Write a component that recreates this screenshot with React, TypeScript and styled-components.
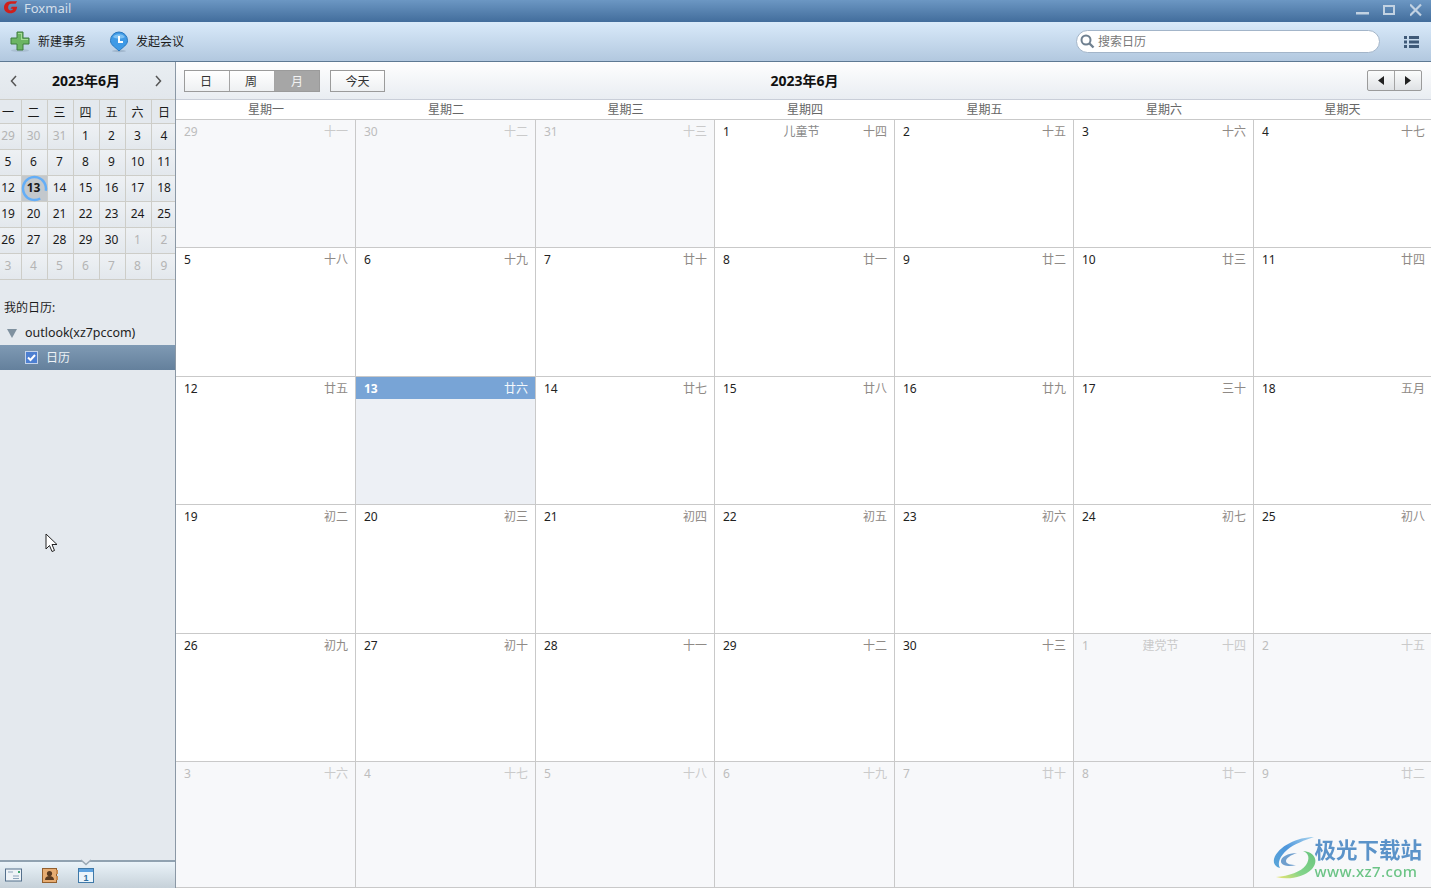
import React from "react";
import styled, { createGlobalStyle } from "styled-components";

const sansStack = `"Noto Sans", "Noto Sans CJK SC", sans-serif`;

const GlobalStyle = createGlobalStyle`
  html, body {
    margin: 0;
    padding: 0;
    height: 100%;
    overflow: hidden;
    background: #e4e9ee;
  }
  #root {
    height: 100%;
  }
  * {
    box-sizing: border-box;
  }
`;

type DayCell = {
  day: number;
  lunar: string;
  muted?: boolean;
  today?: boolean;
  festival?: string;
};

const weekdays = ["星期一", "星期二", "星期三", "星期四", "星期五", "星期六", "星期天"];
const miniHead = ["一", "二", "三", "四", "五", "六", "日"];

const weeks: DayCell[] = [
  { day: 29, lunar: "十一", muted: true },
  { day: 30, lunar: "十二", muted: true },
  { day: 31, lunar: "十三", muted: true },
  { day: 1, lunar: "十四", festival: "儿童节" },
  { day: 2, lunar: "十五" },
  { day: 3, lunar: "十六" },
  { day: 4, lunar: "十七" },
  { day: 5, lunar: "十八" },
  { day: 6, lunar: "十九" },
  { day: 7, lunar: "廿十" },
  { day: 8, lunar: "廿一" },
  { day: 9, lunar: "廿二" },
  { day: 10, lunar: "廿三" },
  { day: 11, lunar: "廿四" },
  { day: 12, lunar: "廿五" },
  { day: 13, lunar: "廿六", today: true },
  { day: 14, lunar: "廿七" },
  { day: 15, lunar: "廿八" },
  { day: 16, lunar: "廿九" },
  { day: 17, lunar: "三十" },
  { day: 18, lunar: "五月" },
  { day: 19, lunar: "初二" },
  { day: 20, lunar: "初三" },
  { day: 21, lunar: "初四" },
  { day: 22, lunar: "初五" },
  { day: 23, lunar: "初六" },
  { day: 24, lunar: "初七" },
  { day: 25, lunar: "初八" },
  { day: 26, lunar: "初九" },
  { day: 27, lunar: "初十" },
  { day: 28, lunar: "十一" },
  { day: 29, lunar: "十二" },
  { day: 30, lunar: "十三" },
  { day: 1, lunar: "十四", muted: true, festival: "建党节" },
  { day: 2, lunar: "十五", muted: true },
  { day: 3, lunar: "十六", muted: true },
  { day: 4, lunar: "十七", muted: true },
  { day: 5, lunar: "十八", muted: true },
  { day: 6, lunar: "十九", muted: true },
  { day: 7, lunar: "廿十", muted: true },
  { day: 8, lunar: "廿一", muted: true },
  { day: 9, lunar: "廿二", muted: true },
];

const Page = styled.div`
  position: relative;
  width: 1431px;
  height: 888px;
  display: flex;
  flex-direction: column;
  overflow: hidden;
  font-family: ${sansStack};
  font-size: 12px;
  color: #222;
`;

const TitleBar = styled.div`
  flex: 0 0 22px;
  display: flex;
  align-items: flex-start;
  padding-left: 4px;
  background: linear-gradient(#6c97c3, #426d9c);
`;

const AppName = styled.span`
  margin-left: 6px;
  font-size: 13px;
  line-height: 17px;
  color: #d3dfeb;
`;

const WindowControls = styled.div`
  margin-left: auto;
  display: flex;
  align-items: flex-start;
  gap: 13px;
  padding: 3px 8px 0 0;
`;

const Toolbar = styled.div`
  flex: 0 0 40px;
  display: flex;
  align-items: center;
  padding: 0 12px 0 10px;
  background: linear-gradient(#d9eafa, #b2c8df);
  border-bottom: 1px solid #5e7993;
`;

const ToolButton = styled.div<{ $gap: number; $width: number }>`
  display: flex;
  align-items: center;
  width: ${(p) => p.$width}px;
  gap: ${(p) => p.$gap}px;
  font-size: 12px;
  color: #1c1c1c;
`;

const RaisedLabel = styled.span`
  margin-bottom: 2px;
`;

const SearchBox = styled.div`
  margin-left: auto;
  width: 304px;
  height: 23px;
  display: flex;
  align-items: center;
  gap: 3px;
  padding-left: 3px;
  border: 1px solid #a3b5c9;
  border-radius: 12px;
  background: #fff;
  color: #777;
`;

const MenuButton = styled.div`
  margin-left: 24px;
  width: 15px;
  display: flex;
`;

const Body = styled.div`
  flex: 1;
  min-height: 0;
  display: flex;
`;

const Sidebar = styled.aside`
  flex: 0 0 176px;
  display: flex;
  flex-direction: column;
  background: #e4e9ee;
  border-right: 1px solid #8b98a5;
`;

const MonthHead = styled.div`
  flex: 0 0 37px;
  display: flex;
  align-items: center;
  justify-content: space-between;
  padding: 0 13px 0 10px;
  background: linear-gradient(#e9eef2, #e2e7ec);
`;

const MonthTitle = styled.span`
  margin-bottom: 2px;
  font-size: 14px;
  font-weight: 700;
  color: #111;
`;

const MiniGrid = styled.div`
  display: grid;
  grid-template-columns: 22px repeat(5, 26px) 1fr;
  grid-template-rows: 24px repeat(6, 26px);
  border-top: 1px solid #cdcdc8;
`;

const MiniCell = styled.div<{ $muted?: boolean; $head?: boolean; $today?: boolean }>`
  position: relative;
  display: flex;
  align-items: center;
  justify-content: center;
  padding-right: 2px;
  padding-bottom: ${(p) => (p.$head ? 0 : 2)}px;
  border-right: 1px solid #cdcdc8;
  border-bottom: 1px solid #cdcdc8;
  font-size: 12px;
  font-weight: ${(p) => (p.$today ? 700 : 400)};
  color: ${(p) => (p.$muted ? "#b4b4b4" : "#1a1a1a")};
  background: ${(p) =>
    p.$today
      ? "#c3c8cd"
      : p.$head
        ? "transparent"
        : "linear-gradient(#eef1f4, #e3e8ed)"};

  &:nth-child(7n + 1) {
    padding-right: 5px;
  }

  &:nth-child(7n) {
    padding-right: 0;
    padding-left: 1px;
    border-right: none;
  }
`;

const TodayRing = styled.svg`
  position: absolute;
  left: -1px;
  top: -1px;
`;

const SectionTitle = styled.div`
  margin-top: 19px;
  padding-left: 4px;
  line-height: 18px;
  color: #1c1c1c;
`;

const AccountRow = styled.div`
  margin-top: 6px;
  height: 19px;
  display: flex;
  align-items: center;
  gap: 8px;
  padding-left: 7px;
  font-size: 12.45px;
  color: #222;
`;

const AccountCaret = styled.svg`
  margin-top: 1px;
`;

const CalendarRow = styled.div`
  margin-top: 3px;
  height: 25px;
  display: flex;
  align-items: center;
  gap: 8px;
  padding-left: 25px;
  color: #eef2f6;
  background: linear-gradient(#7f9ab4, #64809c);
`;

const CheckBox = styled.span`
  width: 13px;
  height: 13px;
  display: flex;
  background: #4d7fd1;
  border: 1px solid #c3d3ea;
`;

const SideSpacer = styled.div`
  flex: 1;
`;

const SideFooter = styled.div`
  position: relative;
  flex: 0 0 28px;
  display: flex;
  align-items: center;
  gap: 20px;
  padding-left: 5px;
  background: linear-gradient(#eaf3f9, #c6d1d9);
  border-top: 2px solid #90a2b1;
`;

const Notch = styled.svg`
  position: absolute;
  left: 80px;
  top: -3px;
`;

const Main = styled.main`
  flex: 1;
  min-width: 0;
  display: flex;
  flex-direction: column;
  background: #fff;
`;

const MainHead = styled.div`
  flex: 0 0 38px;
  display: grid;
  grid-template-columns: 1fr auto 1fr;
  align-items: center;
  padding: 0 8px 0 8px;
  background: linear-gradient(#fefefe, #e9edf2);
  border-bottom: 1px solid #c9ced8;
`;

const HeadLeft = styled.div`
  display: flex;
  gap: 10px;
`;

const Segments = styled.div`
  display: flex;
  border: 1px solid #9b9b9b;
  width: 136px;
  height: 22px;
`;

const Segment = styled.div<{ $active?: boolean }>`
  flex: 0 0 ${(p) => (p.$active ? 44 : 45)}px;
  display: flex;
  align-items: center;
  justify-content: center;
  padding-right: ${(p) => (p.$active ? 0 : 2)}px;
  font-size: 12px;
  color: ${(p) => (p.$active ? "#f2f2f2" : "#333")};
  background: ${(p) => (p.$active ? "#a6a6a6" : "linear-gradient(#ffffff, #eef0f2)")};
  border-right: 1px solid #a4a4a4;

  &:last-child {
    border-right: none;
  }
`;

const TodayButton = styled.div`
  width: 55px;
  height: 22px;
  display: flex;
  align-items: center;
  justify-content: center;
  color: #333;
  border: 1px solid #9b9b9b;
  background: linear-gradient(#ffffff, #eef0f2);
`;

const HeadTitle = styled.div`
  margin-bottom: 2px;
  padding-left: 2px;
  font-size: 14px;
  font-weight: 700;
  color: #111;
`;

const Pager = styled.div`
  justify-self: end;
  display: flex;
  width: 55px;
  height: 21px;
  margin-right: 1px;
  border: 1px solid #9b9b9b;
  border-radius: 2px;
  background: linear-gradient(#fbfcfc, #dfe2e5);
`;

const PagerButton = styled.div`
  flex: 1;
  display: flex;
  align-items: center;
  justify-content: center;

  & + & {
    border-left: 1px solid #a4a4a4;
  }
`;

const columns = "180px 180px 179px 180px 179px 180px 1fr";

const WeekHead = styled.div`
  flex: 0 0 20px;
  display: grid;
  grid-template-columns: ${columns};
  border-bottom: 1px solid #c9c9c9;
`;

const WeekLabel = styled.div`
  display: flex;
  align-items: center;
  justify-content: center;
  padding-bottom: 1px;
  line-height: 15px;
  color: #666;
`;

const MonthGrid = styled.div`
  flex: 1;
  min-height: 0;
  display: grid;
  grid-template-columns: ${columns};
  grid-template-rows: 128px 129px 128px 129px 128px 1fr;
`;

const CellHead = styled.div<{ $muted?: boolean; $today?: boolean }>`
  height: 22px;
  display: flex;
  align-items: center;
  justify-content: space-between;
  padding: 0 7px 0 8px;
  color: ${(p) => (p.$today ? "#fff" : p.$muted ? "#bdbdbd" : "#222")};
  background: ${(p) => (p.$today ? "#78a4d6" : "transparent")};
  font-weight: ${(p) => (p.$today ? 700 : 400)};
`;

const Cell = styled.div<{ $muted?: boolean; $today?: boolean }>`
  display: flex;
  flex-direction: column;
  border-right: 1px solid #c9c9c9;
  border-bottom: 1px solid #c9c9c9;
  background: ${(p) => (p.$muted ? "#f7f8fa" : p.$today ? "#edf0f5" : "#fff")};

  &:nth-child(7n) {
    border-right: none;
  }

  &:nth-child(7n) ${CellHead} {
    padding-right: 6px;
  }
`;

const Lunar = styled.span<{ $muted?: boolean; $today?: boolean }>`
  font-weight: 400;
  color: ${(p) => (p.$today ? "#f4f8fc" : p.$muted ? "#cacaca" : "#8f8a86")};
`;

const Festival = styled.span<{ $muted?: boolean }>`
  color: ${(p) => (p.$muted ? "#cacaca" : "#8a8a8a")};
  margin-left: 10px;
`;

const Watermark = styled.div`
  position: absolute;
  right: 9px;
  bottom: 8px;
  display: flex;
  align-items: center;
  filter: blur(0.4px);
`;

const MarkText = styled.div`
  display: flex;
  flex-direction: column;
  margin-left: -8px;
`;

const MarkTitle = styled.span`
  margin: 2px 0 -1px;
  font-family: "Liberation Sans", "Noto Sans CJK SC", sans-serif;
  font-size: 21.5px;
  line-height: 25px;
  font-weight: 700;
  color: #5b93c9;
`;

const MarkUrl = styled.span`
  font-size: 15px;
  line-height: 17px;
  font-weight: 500;
  letter-spacing: 0.4px;
  color: #6cc486;
`;

const Pointer = styled.svg`
  position: absolute;
  left: 45px;
  top: 533px;
`;

const FoxLogo = () => (
  <svg width="14" height="15" viewBox="0 0 17 15">
    <path
      d="M8 0h8l-2 3H9C6.500 3 5 5 5 7.500 5 10 6.500 11 8 11c1.500 0 2.500-.6 3-2H8l1.500-2.500H16c-.3 4.500-3.200 8-8.500 8C3 14.500 0 11.500 0 7.500 0 3.500 3.500 0 8 0z"
      fill="#cf1f1c"
    />
  </svg>
);

const PlusIcon = () => (
  <svg width="20" height="22" viewBox="0 0 20 22">
    <ellipse cx="10" cy="19.500" rx="9" ry="1.500" fill="#9fb2c4" opacity="0.6" />
    <path d="M7 1h6v6h6v6h-6v6H7v-6H1V7h6z" fill="#6cb564" stroke="#3f7d3f" />
    <path d="M8 2h4v6h6v1h-7V3H8z" fill="#a5dc97" />
  </svg>
);

const MeetingIcon = () => (
  <svg width="20" height="22" viewBox="0 0 20 22">
    <ellipse cx="10" cy="20" rx="7" ry="1.200" fill="#8fa5bb" opacity="0.6" />
    <path d="M10 1a8.500 8.500 0 0 1 8.500 8.500C18.500 14 14 16 10 20 6 16 1.500 14 1.500 9.500A8.500 8.500 0 0 1 10 1z" fill="#3f9ae6" stroke="#2a78bf" />
    <path d="M4 6c1.500-3 9-4 12 0-3 2-9 2-12 0z" fill="#9bd2f7" opacity="0.7" />
    <path d="M9 5h2v5h3v2H9z" fill="#fff" />
  </svg>
);

const SearchIcon = () => (
  <svg width="15" height="15" viewBox="0 0 15 15">
    <circle cx="6" cy="6" r="4.500" fill="none" stroke="#6f8090" strokeWidth="2" />
    <path d="M9.500 9.500L13.500 13.500" stroke="#6f8090" strokeWidth="2.400" />
  </svg>
);

const ListIcon = () => (
  <svg width="15" height="12" viewBox="0 0 15 12">
    <path
      d="M0 0h3v3H0zM5 0h10v3H5zM0 4.500h3v3H0zM5 4.500h10v3H5zM0 9h3v3H0zM5 9h10v3H5z"
      fill="#3f5a78"
    />
  </svg>
);

const MinIcon = () => (
  <svg width="14" height="14" viewBox="0 0 14 14">
    <rect x="0" y="9" width="13" height="2.500" fill="#c2d2e2" />
  </svg>
);

const MaxIcon = () => (
  <svg width="14" height="14" viewBox="0 0 14 14">
    <rect x="1" y="3" width="10" height="8" fill="none" stroke="#c2d2e2" strokeWidth="2" />
  </svg>
);

const CloseIcon = () => (
  <svg width="13" height="14" viewBox="0 0 13 14">
    <path d="M0 1.500L11 12.500M11 1.500L0 12.500" stroke="#c2d2e2" strokeWidth="2.200" />
  </svg>
);

const Chevron = ({ dir }: { dir: "left" | "right" }) => (
  <svg width="8" height="12" viewBox="0 0 8 12">
    <path
      d={dir === "left" ? "M6 1L1.500 6L6 11" : "M2 1L6.500 6L2 11"}
      fill="none"
      stroke="#555"
      strokeWidth="1.500"
    />
  </svg>
);

const Triangle = ({ dir }: { dir: "left" | "right" }) => (
  <svg width="6" height="9" viewBox="0 0 6 9">
    <path d={dir === "left" ? "M6 0v9L0 4.500z" : "M0 0v9l6-4.500z"} fill="#222" />
  </svg>
);

const MailIcon = () => (
  <svg width="17" height="14" viewBox="0 0 17 14">
    <rect x="0.500" y="1" width="16" height="12" fill="#eef3f7" stroke="#55708c" />
    <path d="M3 4h5M8 8h6M8 10.500h6" stroke="#8ba3ba" />
    <rect x="13" y="3" width="2" height="2" fill="#3ea66f" />
  </svg>
);

const ContactIcon = () => (
  <svg width="16" height="15" viewBox="0 0 16 15">
    <rect x="0.500" y="0.500" width="14" height="14" fill="#e6ac72" stroke="#935f2d" />
    <rect x="14" y="2" width="2" height="4" fill="#c98b4f" />
    <rect x="14" y="8" width="2" height="4" fill="#c98b4f" />
    <circle cx="7.500" cy="5.500" r="2.600" fill="#5a3a20" />
    <path d="M3 12c0-3 2-4 4.500-4s4.500 1 4.500 4z" fill="#5a3a20" />
  </svg>
);

const CalendarIcon = () => (
  <svg width="16" height="15" viewBox="0 0 16 15">
    <rect x="0.500" y="0.500" width="15" height="14" fill="#eaf4fb" stroke="#3f79a8" />
    <rect x="1" y="1" width="14" height="3" fill="#5da2e0" />
    <text x="8" y="13" textAnchor="middle" fontSize="9" fontWeight="700" fill="#2f6d9e" fontFamily="Liberation Sans">
      1
    </text>
  </svg>
);

const SwirlLogo = () => (
  <svg width="50" height="44" viewBox="0 0 50 44">
    <defs>
      <linearGradient id="swirlTop" x1="1" y1="0" x2="0" y2="1">
        <stop offset="0" stopColor="#a9d4ee" />
        <stop offset="0.5" stopColor="#4f97dc" />
        <stop offset="1" stopColor="#5aa6d8" />
      </linearGradient>
      <linearGradient id="swirlBottom" x1="1" y1="0" x2="0" y2="1">
        <stop offset="0" stopColor="#68c47e" />
        <stop offset="0.6" stopColor="#83d48a" />
        <stop offset="1" stopColor="#f0e570" />
      </linearGradient>
    </defs>
    <path d="M42 1C26 1 6 10 2 23c-1 5 2 8 6 9C5 27 8 20 15 14 22 8 33 4 42 1z" fill="url(#swirlTop)" />
    <path d="M25 17c-9 0-17 4-16 9 1 4 9 5 15 3-5 0-10-1-10-4 0-3 5-6 11-8z" fill="#6f9fce" />
    <path d="M31 15c6 2 7 8 3 14-5 7-17 11-30 12 12 3 27 1 36-8 7-8 3-17-9-18z" fill="url(#swirlBottom)" />
  </svg>
);

const App = () => {
  const miniDays = weeks.map((w) => ({ day: w.day, muted: w.muted, today: w.today }));

  return (
    <>
      <GlobalStyle />
      <Page>
        <TitleBar>
          <FoxLogo />
          <AppName>Foxmail</AppName>
          <WindowControls>
            <MinIcon />
            <MaxIcon />
            <CloseIcon />
          </WindowControls>
        </TitleBar>
        <Toolbar>
          <ToolButton $gap={8} $width={99}>
            <PlusIcon />
            <RaisedLabel>新建事务</RaisedLabel>
          </ToolButton>
          <ToolButton $gap={7} $width={90}>
            <MeetingIcon />
            <RaisedLabel>发起会议</RaisedLabel>
          </ToolButton>
          <SearchBox>
            <SearchIcon />
            <RaisedLabel>搜索日历</RaisedLabel>
          </SearchBox>
          <MenuButton>
            <ListIcon />
          </MenuButton>
        </Toolbar>
        <Body>
          <Sidebar>
            <MonthHead>
              <Chevron dir="left" />
              <MonthTitle>2023年6月</MonthTitle>
              <Chevron dir="right" />
            </MonthHead>
            <MiniGrid>
              {miniHead.map((h) => (
                <MiniCell key={h} $head>
                  {h}
                </MiniCell>
              ))}
              {miniDays.map((d, i) => (
                <MiniCell key={i} $muted={d.muted} $today={d.today}>
                  {d.today && (
                    <TodayRing width="27" height="27" viewBox="0 0 27 27">
                      <circle
                        cx="13.500"
                        cy="13.500"
                        r="11.500"
                        fill="none"
                        stroke="#64aef7"
                        strokeWidth="2.500"
                        strokeDasharray="62 10"
                        transform="rotate(60 13.500 13.500)"
                      />
                    </TodayRing>
                  )}
                  {d.day}
                </MiniCell>
              ))}
            </MiniGrid>
            <SectionTitle>我的日历:</SectionTitle>
            <AccountRow>
              <AccountCaret width="10" height="9" viewBox="0 0 10 9">
                <path d="M0 0h10L5 9z" fill="#7f919f" />
              </AccountCaret>
              outlook(xz7pccom)
            </AccountRow>
            <CalendarRow>
              <CheckBox>
                <svg width="11" height="11" viewBox="0 0 11 11">
                  <path d="M2 5.500L4.500 8L9 3" fill="none" stroke="#fff" strokeWidth="2" />
                </svg>
              </CheckBox>
              <RaisedLabel>日历</RaisedLabel>
            </CalendarRow>
            <SideSpacer />
            <SideFooter>
              <Notch width="12" height="7" viewBox="0 0 12 7">
                <path d="M1 1L6 5.500L11 1" fill="#e4e9ee" stroke="#9aa8b4" strokeWidth="1.500" />
              </Notch>
              <MailIcon />
              <ContactIcon />
              <CalendarIcon />
            </SideFooter>
          </Sidebar>
          <Main>
            <MainHead>
              <HeadLeft>
                <Segments>
                  <Segment>日</Segment>
                  <Segment>周</Segment>
                  <Segment $active>月</Segment>
                </Segments>
                <TodayButton>今天</TodayButton>
              </HeadLeft>
              <HeadTitle>2023年6月</HeadTitle>
              <Pager>
                <PagerButton>
                  <Triangle dir="left" />
                </PagerButton>
                <PagerButton>
                  <Triangle dir="right" />
                </PagerButton>
              </Pager>
            </MainHead>
            <WeekHead>
              {weekdays.map((w) => (
                <WeekLabel key={w}>{w}</WeekLabel>
              ))}
            </WeekHead>
            <MonthGrid>
              {weeks.map((c, i) => (
                <Cell key={i} $muted={c.muted} $today={c.today}>
                  <CellHead $muted={c.muted} $today={c.today}>
                    <span>{c.day}</span>
                    {c.festival && <Festival $muted={c.muted}>{c.festival}</Festival>}
                    <Lunar $muted={c.muted} $today={c.today}>
                      {c.lunar}
                    </Lunar>
                  </CellHead>
                </Cell>
              ))}
            </MonthGrid>
          </Main>
        </Body>
        <Watermark>
          <SwirlLogo />
          <MarkText>
            <MarkTitle>极光下载站</MarkTitle>
            <MarkUrl>www.xz7.com</MarkUrl>
          </MarkText>
        </Watermark>
        <Pointer width="14" height="21" viewBox="0 0 14 21">
          <path d="M1 1v15l3.500-3.500 2.500 6 2.500-1-2.500-6H12z" fill="#fff" stroke="#222" />
        </Pointer>
      </Page>
    </>
  );
};

export default App;
